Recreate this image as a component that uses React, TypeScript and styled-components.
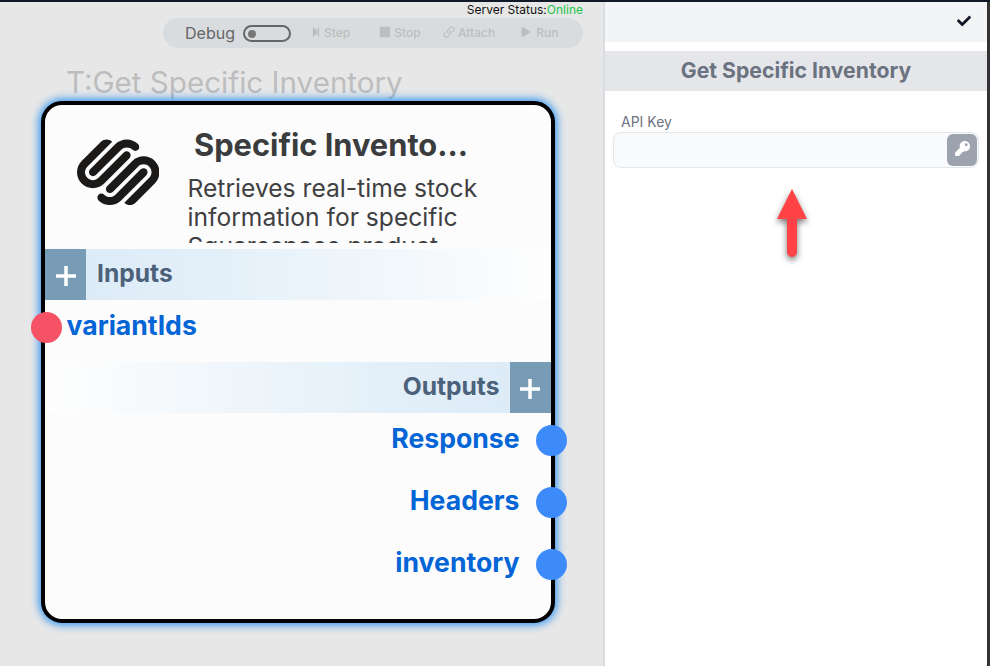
import React from 'react';
import styled, { createGlobalStyle } from 'styled-components';
import { SiSquarespace } from 'react-icons/si';
import { FaCheck, FaKey, FaStepForward, FaStop, FaPlay } from 'react-icons/fa';
import { ImLink } from 'react-icons/im';

const GlobalStyle = createGlobalStyle`
  * { box-sizing: border-box; }
  body { margin: 0; font-family: Inter, sans-serif; overflow: hidden; }
`;

const Page = styled.div`
  display: grid;
  grid-template-columns: 603px 384px 3px;
  height: 666px;
  border-top: 2px solid #111827;
  background: #333335;
`;

const Canvas = styled.main`
  background: #e7e7e7;
  display: flex;
  flex-direction: column;
`;

const Status = styled.div`
  height: 16px;
  padding-right: 20px;
  text-align: right;
  font-size: 12px;
  line-height: 16px;
  color: #111;
  span { color: #22c54b; }
`;

const Toolbar = styled.div`
  margin-left: 163px;
  width: 420px;
  height: 30px;
  border-radius: 15px;
  background: #d9dcde;
  display: flex;
  align-items: center;
  padding-left: 22px;
`;

const DebugLabel = styled.span`
  width: 58px;
  font-size: 16px;
  line-height: 28px;
  color: #666;
`;

const Toggle = styled.span`
  width: 48px;
  height: 17px;
  margin-top: 1px;
  border: 2px solid #666;
  border-radius: 9px;
  display: flex;
  align-items: center;
  padding-left: 3px;
  &::before {
    content: '';
    width: 8px;
    height: 8px;
    border-radius: 50%;
    background: #777;
  }
`;

const Tool = styled.button<{ $gap: number; $space: number }>`
  margin: 0 0 0 ${(p) => p.$gap}px;
  padding: 0;
  border: 0;
  background: none;
  display: flex;
  align-items: center;
  gap: ${(p) => p.$space}px;
  font: 500 12px/16px Inter, sans-serif;
  color: #bcbdbf;
  svg { margin-bottom: 2px; }
`;

const NodeTitle = styled.h1`
  margin: 14px 0 0 66px;
  height: 39px;
  font-size: 29.6px;
  line-height: 41px;
  font-weight: 400;
  color: #bdbdbd;
  white-space: nowrap;
`;

const Card = styled.section`
  margin-left: 41px;
  width: 513.5px;
  height: 522px;
  border: 4px solid #000;
  border-radius: 21px;
  background: #fcfcfc;
  box-shadow: 0 0 8px 2px #2f93f0;
`;

const CardHeader = styled.header`
  height: 144px;
  display: flex;
  padding: 34px 0 0 31.5px;
`;

const Logo = styled(SiSquarespace)`
  width: 82.5px;
  height: 82.5px;
  margin-top: -8.5px;
  flex: none;
  color: #1b1a18;
`;

const HeaderText = styled.div`
  margin: -14px 0 0 28.5px;
  height: 118px;
  overflow: hidden;
`;

const CardName = styled.h2`
  margin: 0 0 9px 6.5px;
  font-size: 30.8px;
  line-height: 39px;
  height: 40px;
  font-weight: 700;
  color: #3b3c3e;
`;

const Description = styled.p`
  margin: 0;
  width: 320px;
  font-size: 24.64px;
  line-height: 29.2px;
  color: #3f4042;
`;

const Band = styled.div<{ $end?: boolean }>`
  height: 51px;
  display: flex;
  flex-direction: ${(p) => (p.$end ? 'row-reverse' : 'row')};
  background: linear-gradient(${(p) => (p.$end ? 'to left' : 'to right')}, #dbeaf7, #e4f0f9 35%, #fefefe);
  font-size: 24.64px;
  line-height: 49px;
  font-weight: 700;
  color: #4b627a;
`;

const AddButton = styled.button`
  width: 41px;
  height: 51px;
  padding: 3px 0 0;
  border: 0;
  background: #789bb6;
  display: grid;
  place-items: center;
`;

const BandLabel = styled.span`
  padding: 0 10px 0 11px;
`;

const Port = styled.div<{ $end?: boolean; $height: number }>`
  height: ${(p) => p.$height}px;
  padding-bottom: 12px;
  margin: 0 ${(p) => (p.$end ? -16 : 0)}px 0 ${(p) => (p.$end ? 0 : -14.5)}px;
  display: flex;
  align-items: center;
  flex-direction: ${(p) => (p.$end ? 'row-reverse' : 'row')};
  gap: ${(p) => (p.$end ? 16 : 5)}px;
  font-size: 26.6px;
  font-weight: 700;
  color: #0465d6;
`;

const Dot = styled.span<{ $color: string }>`
  width: 31px;
  height: 31px;
  margin-top: 5px;
  border-radius: 50%;
  background: ${(p) => p.$color};
`;

const PortName = styled.span`
  line-height: 32px;
  margin-top: -1px;
`;

const Panel = styled.aside`
  border-left: 2px solid #d9dde1;
  background: #fff;
  display: flex;
  flex-direction: column;
`;

const PanelBar = styled.div`
  height: 40px;
  background: #f3f4f6;
  display: flex;
  justify-content: flex-end;
  padding: 12px 16px 0 0;
  color: #111827;
`;

const PanelTitle = styled.h3`
  margin: 9px 0 0;
  height: 40px;
  background: #e5e6ea;
  text-align: center;
  font-size: 21.2px;
  line-height: 39px;
  font-weight: 700;
  color: #6b7280;
`;

const FieldLabel = styled.label`
  margin: 21px 0 0 16px;
  height: 20px;
  font-size: 14px;
  line-height: 20px;
  color: #6b7280;
`;

const Field = styled.div`
  margin-left: 8px;
  width: 366px;
  height: 36px;
  border: 1px solid #e3e6ea;
  border-radius: 8px;
  background: #f9fafc;
  display: flex;
  justify-content: flex-end;
  padding: 1px;
`;

const KeyButton = styled.button`
  width: 30px;
  height: 32px;
  padding: 0 0 3px;
  border: 0;
  border-radius: 6px;
  background: #9ca3af;
  color: #fff;
  display: grid;
  place-items: center;
`;

const Arrow = styled.svg`
  margin: 16px 0 0 164px;
  overflow: visible;
  filter: drop-shadow(0 3px 3px rgba(0, 0, 0, 0.55));
`;

const Plus = () => (
  <svg width="20" height="20" viewBox="0 0 20 20">
    <path d="M10 0V20M0 10H20" stroke="#fff" strokeWidth="3.5" />
  </svg>
);

const outputs = ['Response', 'Headers', 'inventory'];

export default function App() {
  return (
    <>
      <GlobalStyle />
      <Page>
        <Canvas>
          <Status>Server Status:<span>Online</span></Status>
          <Toolbar>
            <DebugLabel>Debug</DebugLabel>
            <Toggle />
            <Tool $gap={19.5} $space={3.5}><FaStepForward size={10} />Step</Tool>
            <Tool $gap={28.5} $space={3.5}><FaStop size={12} />Stop</Tool>
            <Tool $gap={22.5} $space={3}><ImLink size={12} />Attach</Tool>
            <Tool $gap={26} $space={5}><FaPlay size={10} />Run</Tool>
          </Toolbar>
          <NodeTitle>T:Get Specific Inventory</NodeTitle>
          <Card>
            <CardHeader>
              <Logo />
              <HeaderText>
                <CardName>Specific Invento...</CardName>
                <Description>Retrieves real-time stock information for specific Squarespace product</Description>
              </HeaderText>
            </CardHeader>
            <Band><AddButton><Plus /></AddButton><BandLabel>Inputs</BandLabel></Band>
            <Port $height={62}><Dot $color="#f55266" /><PortName>variantIds</PortName></Port>
            <Band $end><AddButton><Plus /></AddButton><BandLabel>Outputs</BandLabel></Band>
            {outputs.map((name) => (
              <Port key={name} $end $height={62}>
                <Dot $color="#3d8bfb" />
                <PortName>{name}</PortName>
              </Port>
            ))}
          </Card>
        </Canvas>
        <Panel>
          <PanelBar><FaCheck size={14} /></PanelBar>
          <PanelTitle>Get Specific Inventory</PanelTitle>
          <FieldLabel>API Key</FieldLabel>
          <Field><KeyButton><FaKey size={15} /></KeyButton></Field>
          <Arrow width="46" height="80" viewBox="0 0 46 80">
            <path d="M23 5L38 35H28V68A5 5 0 0 1 18 68V35H8Z" fill="#ff4245" />
          </Arrow>
        </Panel>
      </Page>
    </>
  );
}
